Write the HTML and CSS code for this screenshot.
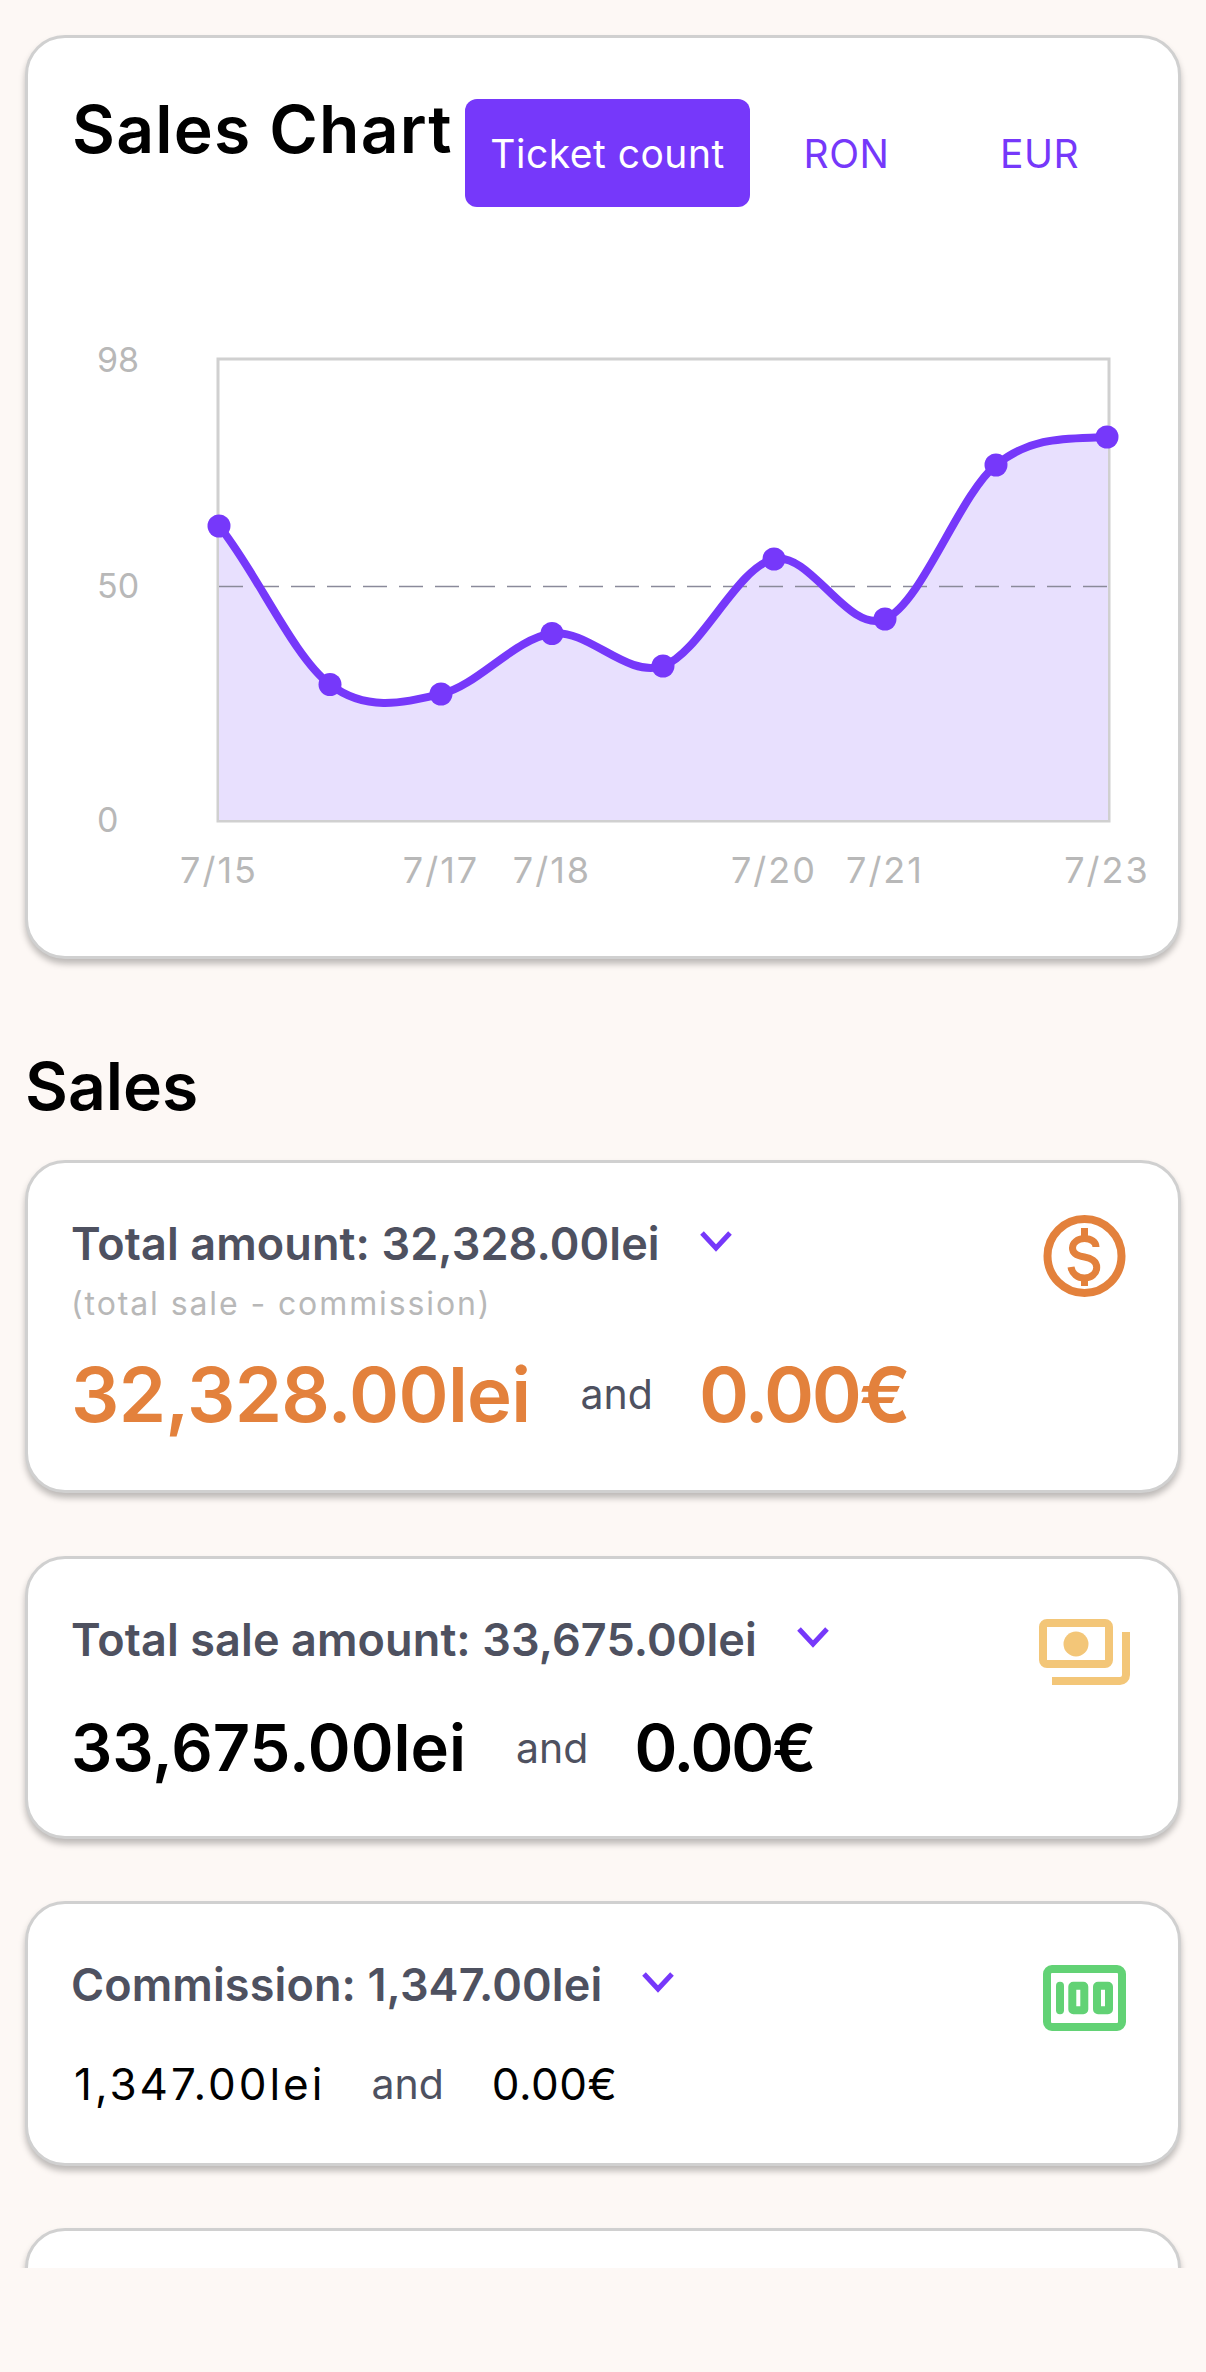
FILE: index.html
```html
<!DOCTYPE html>
<html lang="en">
<head>
    <meta charset="UTF-8">
    <meta name="viewport" content="width=device-width, initial-scale=1.0">
    <title>Sales</title>
    <link rel="stylesheet" href="styles.css">
</head>
<body>
    <div class="screen">
        <section class="card chart-card">
            <div class="chart-head">
                <h2 class="heading chart-title">Sales Chart</h2>
                <div class="tabs">
                    <button class="tab tab-active">Ticket count</button>
                    <button class="tab">RON</button>
                    <button class="tab">EUR</button>
                </div>
            </div>
            <!-- viewBox uses page coordinates -->
            <svg class="chart" viewBox="28 330 1150 580">
                <rect class="plot" x="218" y="359" width="891" height="462"/>
                <path class="area" d="M219 526C256 571 293 656.5 330 684.5C367 712.5 404 702.5 441 694C478 685.5 515 638.2 552 633.5C589 628.8 626 678.4 663 666C700 653.6 737 566.8 774 559C811 551.2 848 634.7 885 619C922 603.3 959 495 996 465C1033 435 1070 439 1107 437L1108 437V820H219Z"/>
                <line class="mid" x1="219" y1="586.5" x2="1108" y2="586.5"/>
                <path class="line" d="M219 526C256 571 293 656.5 330 684.5C367 712.5 404 702.5 441 694C478 685.5 515 638.2 552 633.5C589 628.8 626 678.4 663 666C700 653.6 737 566.8 774 559C811 551.2 848 634.7 885 619C922 603.3 959 495 996 465C1033 435 1070 439 1107 437"/>
                <g class="dots">
                    <circle cx="219" cy="526" r="11.5"/>
                    <circle cx="330" cy="684.5" r="11.5"/>
                    <circle cx="441" cy="694" r="11.5"/>
                    <circle cx="552" cy="633.5" r="11.5"/>
                    <circle cx="663" cy="666" r="11.5"/>
                    <circle cx="774" cy="559" r="11.5"/>
                    <circle cx="885" cy="619" r="11.5"/>
                    <circle cx="996" cy="465" r="11.5"/>
                    <circle cx="1107" cy="437" r="11.5"/>
                </g>
                <g class="ticks">
                    <text x="97" y="372">98</text>
                    <text x="97" y="598">50</text>
                    <text x="97" y="832">0</text>
                </g>
                <g class="ticks ticks-x">
                    <text x="219" y="883">7/15</text>
                    <text x="441" y="883">7/17</text>
                    <text x="552" y="883">7/18</text>
                    <text x="774" y="883">7/20</text>
                    <text x="885" y="883">7/21</text>
                    <text x="1107" y="883">7/23</text>
                </g>
            </svg>
        </section>

        <h2 class="heading section-title">Sales</h2>

        <section class="card stat-card stat-card-first">
            <div class="stat-body">
                <div class="stat-title">
                    <span>Total amount: 32,328.00lei</span>
                    <svg class="chevron" viewBox="0 0 36 24"><path d="M4 4L18 19L32 4"/></svg>
                </div>
                <p class="stat-note">(total sale - commission)</p>
                <div class="stat-values values-lg">
                    <span class="value">32,328.00lei</span>
                    <span class="and">and</span>
                    <span class="value value-eur">0.00€</span>
                </div>
            </div>
            <svg class="stat-icon icon-orange" viewBox="0 0 98 98">
                <circle cx="48.5" cy="49" r="37"/>
                <path class="icon-thin" d="M60 40C60 35 55 31.500 48.500 31.500C41.500 31.500 36.500 36 36.500 41C36.500 46.500 42 49 48.500 50C55 51 60.700 54.500 60.700 60.500C60.700 66.500 55 71 48.500 71C41.500 71 36 66.500 35 60M48.500 21V31M48.500 71V79"/>
            </svg>
        </section>

        <section class="card stat-card">
            <div class="stat-body">
                <div class="stat-title">
                    <span>Total sale amount: 33,675.00lei</span>
                    <svg class="chevron" viewBox="0 0 36 24"><path d="M4 4L18 19L32 4"/></svg>
                </div>
                <div class="stat-values values-md">
                    <span class="value">33,675.00lei</span>
                    <span class="and">and</span>
                    <span class="value value-eur">0.00€</span>
                </div>
            </div>
            <svg class="stat-icon icon-yellow" viewBox="0 0 98 98">
                <rect x="7" y="16" width="66" height="41" rx="4"/>
                <circle class="icon-fill" cx="40" cy="37" r="12.500"/>
                <path d="M16 74H84A6 6 0 0 0 90 68V25"/>
            </svg>
        </section>

        <section class="card stat-card">
            <div class="stat-body">
                <div class="stat-title">
                    <span>Commission: 1,347.00lei</span>
                    <svg class="chevron" viewBox="0 0 36 24"><path d="M4 4L18 19L32 4"/></svg>
                </div>
                <div class="stat-values values-sm">
                    <span class="value">1,347.00lei</span>
                    <span class="and">and</span>
                    <span class="value value-eur">0.00€</span>
                </div>
            </div>
            <svg class="stat-icon icon-green" viewBox="0 0 98 98">
                <rect x="11" y="20" width="75" height="58" rx="5"/>
                <rect class="icon-fill" x="20" y="32.700" width="8" height="32.600" rx="4"/>
                <rect x="36.300" y="36.700" width="12" height="24.600" rx="1"/>
                <rect x="61" y="36.700" width="12" height="24.600" rx="1"/>
            </svg>
        </section>

        <section class="card stat-card card-cut"></section>
    </div>
</body>
</html>
```

FILE: styles.css
```css
* {
    box-sizing: border-box;
}
body {
    margin: 0;
    background-color: #fdf8f5;
    font-family: Inter, 'Noto Sans', sans-serif;
}
.screen {
    height: 2268px;
    overflow: hidden;
    padding: 35px 25px 0;
}
.card {
    background-color: white;
    border: 3px solid #d0d0d0;
    border-radius: 40px;
    box-shadow: 0 5px 6px rgba(0, 0, 0, 0.25);
    padding: 0 44px 0 43px;
}
.heading {
    margin: 0;
    font-size: 66px;
    line-height: 80px;
    font-weight: 600;
    color: black;
}
.chart-title {
    margin-left: 1px;
    letter-spacing: 1.200px;
}
.chart-card {
    padding-top: 51px;
    padding-bottom: 46px;
}
.chart-head {
    display: flex;
    justify-content: space-between;
    align-items: flex-start;
}
.tabs {
    display: flex;
    margin-top: 10px;
    margin-right: -2px;
}
.tab {
    width: 193px;
    height: 108px;
    padding: 0;
    border: none;
    border-radius: 12px;
    background: none;
    font-family: inherit;
    font-size: 39px;
    letter-spacing: 0.5px;
    color: #7638fa;
}
.tab-active {
    width: 285px;
    background-color: #7638fa;
    color: white;
}
.chart {
    display: block;
    width: 1150px;
    height: 580px;
    margin: 123px -44px 0 -43px;
}
.plot {
    fill: white;
    stroke: #d0d0d0;
    stroke-width: 3;
}
.area {
    fill: #e8e0fe;
}
.mid {
    stroke: #8a8a9a;
    stroke-width: 1.500;
    stroke-dasharray: 24 12;
}
.line {
    fill: none;
    stroke: #7638fa;
    stroke-width: 8;
}
.dots {
    fill: #7638fa;
}
.ticks {
    font-size: 34px;
    fill: #b8b8b8;
}
.ticks-x {
    font-size: 36px;
    letter-spacing: 2px;
    text-anchor: middle;
}
.section-title {
    margin-top: 87px;
    margin-bottom: 34px;
}
.stat-card {
    display: flex;
    justify-content: space-between;
    align-items: flex-start;
    padding-top: 53px;
    padding-bottom: 48px;
    margin-bottom: 62px;
}
.stat-card-first {
    margin-bottom: 63px;
}
.stat-body {
    flex: 1;
}
.stat-title {
    display: flex;
    gap: 40px;
    align-items: flex-start;
    font-size: 45px;
    line-height: 56px;
    font-weight: 600;
    letter-spacing: 0.1px;
    color: #4e5160;
}
.chevron {
    width: 36px;
    height: 24px;
    margin-top: 13px;
    margin-left: -2px;
}
.chevron path {
    fill: none;
    stroke: #7638fa;
    stroke-width: 5;
}
.stat-note {
    margin: 10px 0 0;
    font-size: 32px;
    line-height: 44px;
    letter-spacing: 1.900px;
    color: #b8b8b8;
}
.stat-values {
    display: flex;
    align-items: center;
    gap: 50px;
    margin-top: 40px;
    color: black;
}
.and {
    font-size: 41px;
    font-weight: 400;
    letter-spacing: 0;
    color: #4e5160;
}
.values-lg {
    margin-top: 20px;
    font-size: 76px;
    line-height: 96px;
    font-weight: 600;
    letter-spacing: -0.7px;
    color: #e3813c;
}
.values-lg .value-eur {
    margin-left: -4px;
    letter-spacing: -2.500px;
}
.values-md {
    font-size: 65px;
    line-height: 80px;
    font-weight: 600;
}
.values-md .value-eur {
    margin-left: -4px;
    letter-spacing: -2px;
}
.values-sm {
    margin-left: 3px;
    font-size: 44px;
    line-height: 62px;
    font-weight: 400;
    letter-spacing: 3px;
}
.values-sm .and {
    margin-left: -4px;
}
.values-sm .value-eur {
    margin-left: -2px;
    letter-spacing: 0.5px;
}
.stat-icon {
    flex: none;
    width: 98px;
    height: 98px;
    margin-top: -9px;
    fill: none;
    stroke-width: 8;
}
.icon-thin {
    stroke-width: 7;
}
.icon-orange {
    stroke: #e3813c;
}
.icon-yellow {
    margin-top: -5px;
    stroke: #f3c678;
}
.icon-yellow .icon-fill {
    fill: #f3c678;
    stroke: none;
}
.icon-green {
    margin-top: -8px;
    stroke: #62d275;
}
.icon-green .icon-fill {
    fill: #62d275;
    stroke: none;
}
.card-cut {
    height: 200px;
}
```
